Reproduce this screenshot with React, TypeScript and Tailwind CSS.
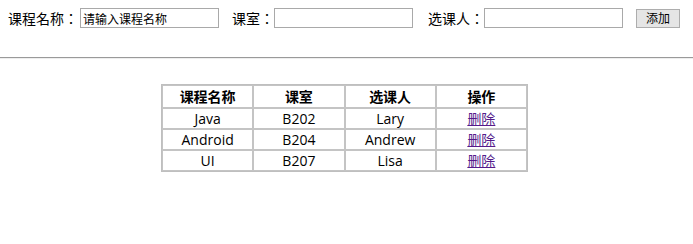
import React from "react";

const rows = [
  { name: "Java", room: "B202", who: "Lary" },
  { name: "Android", room: "B204", who: "Andrew" },
  { name: "UI", room: "B207", who: "Lisa" },
];

const cjk = { fontFamily: '"Noto Sans CJK TC", "Noto Sans CJK SC", sans-serif' };
const mixed = { fontFamily: '"Open Sans", "Noto Sans CJK SC", sans-serif' };

export default function App() {
  return (
    <div className="w-[693px] h-[244px] bg-white text-black" style={cjk}>
      {/* add form */}
      <div className="flex items-center pl-2 pt-[8px] h-[28px] text-[14px]">
        <span>课程名称：</span>
        <input
          className="ml-[2px] w-[139px] h-[20px] border border-[#a9a9a9] px-[2px] text-[12px] outline-none"
          style={{ fontFamily: '"Noto Sans CJK SC", sans-serif' }}
          defaultValue="请输入课程名称"
        />
        <span className="ml-[13px]">课室：</span>
        <input className="w-[139px] h-[20px] border border-[#a9a9a9] outline-none" />
        <span className="ml-[15px]">选课人：</span>
        <input className="w-[139px] h-[20px] border border-[#a9a9a9] outline-none" />
        <button
          className="ml-[13px] w-[44px] h-[19px] border border-[#adadad] bg-[#e5e5e5] text-[12px] leading-none"
          style={{ fontFamily: '"Noto Sans CJK SC", sans-serif' }}
        >
          添加
        </button>
      </div>

      <div className="mt-[29px] border-t border-t-[#9a9a9a] border-b border-b-[#eeeeee]" />

      <div className="flex justify-center pt-[25px] pr-[4px]" style={mixed}>
        <table className="w-[367px] border border-[#bfbfbf] border-separate border-spacing-0 text-[14px] text-center">
          <thead>
            <tr className="h-[23px]">
              {["课程名称", "课室", "选课人", "操作"].map((h) => (
                <th key={h} className="w-1/4 border border-[#c4c4c4] font-bold leading-[18px] p-0">
                  {h}
                </th>
              ))}
            </tr>
          </thead>
          <tbody>
            {rows.map((r) => (
              <tr key={r.name} className="h-[21px]">
                <td className="border border-[#c4c4c4] leading-[17px] p-0">{r.name}</td>
                <td className="border border-[#c4c4c4] leading-[17px] p-0">{r.room}</td>
                <td className="border border-[#c4c4c4] leading-[17px] p-0">{r.who}</td>
                <td className="border border-[#c4c4c4] leading-[17px] p-0">
                  <a href="#" className="text-[#551a8b] underline">删除</a>
                </td>
              </tr>
            ))}
          </tbody>
        </table>
      </div>
    </div>
  );
}
